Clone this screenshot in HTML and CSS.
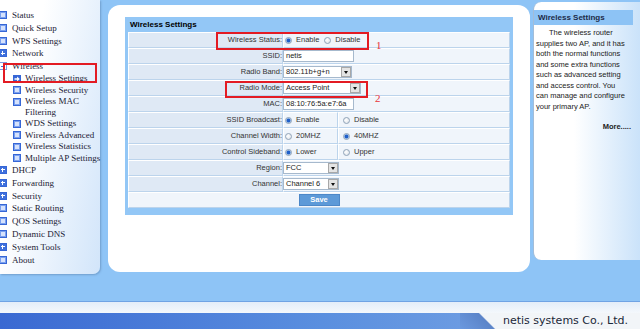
FILE: index.html
```html
<!DOCTYPE html>
<html lang="en">
<head>
    <meta charset="UTF-8">
    <title>Wireless Settings</title>
    <link rel="stylesheet" href="styles.css">
</head>
<body>

    <div class="top">

        <!-- Left menu -->
        <nav class="sidebar">
            <ul class="menu">
                <li><div class="row"><span class="ico"></span>Status</div></li>
                <li><div class="row"><span class="ico"></span>Quick Setup</div></li>
                <li><div class="row"><span class="ico"></span>WPS Settings</div></li>
                <li><div class="row"><span class="ico ico-plus"></span>Network</div></li>
                <li>
                    <div class="row"><span class="ico ico-minus"></span>Wireless</div>
                    <ul class="submenu">
                        <li class="sub-row">
                            <svg class="ico-arrow" width="8" height="8" viewBox="0 0 8 8"><rect width="8" height="8" fill="#3666d6"/><path d="M1.5 3.3h2.6V1.6L6.8 4 4.1 6.4V4.7H1.5z" fill="#fff"/></svg>
                            <span>Wireless Settings</span>
                        </li>
                        <li class="sub-row"><span class="ico"></span><span>Wireless Security</span></li>
                        <li class="sub-row"><span class="ico"></span><span>Wireless MAC<br>Filtering</span></li>
                        <li class="sub-row"><span class="ico"></span><span>WDS Settings</span></li>
                        <li class="sub-row"><span class="ico"></span><span>Wireless Advanced</span></li>
                        <li class="sub-row"><span class="ico"></span><span>Wireless Statistics</span></li>
                        <li class="sub-row"><span class="ico"></span><span>Multiple AP Settings</span></li>
                    </ul>
                </li>
                <li><div class="row"><span class="ico ico-plus"></span>DHCP</div></li>
                <li><div class="row"><span class="ico ico-plus"></span>Forwarding</div></li>
                <li><div class="row"><span class="ico ico-plus"></span>Security</div></li>
                <li><div class="row"><span class="ico"></span>Static Routing</div></li>
                <li><div class="row"><span class="ico"></span>QOS Settings</div></li>
                <li><div class="row"><span class="ico"></span>Dynamic DNS</div></li>
                <li><div class="row"><span class="ico ico-plus"></span>System Tools</div></li>
                <li><div class="row"><span class="ico"></span>About</div></li>
            </ul>
            <div class="mark mark-menu"></div>
        </nav>

        <!-- Settings form -->
        <div class="main">
            <div class="settings">
                <div class="settings-title">Wireless Settings</div>
                <table class="form">
                    <colgroup><col class="col-label"><col class="col-mid"><col></colgroup>
                    <tr>
                        <td class="label">Wireless Status:</td>
                        <td colspan="2"><span class="opt"><span class="radio on"></span>Enable</span><span class="opt"><span class="radio"></span>Disable</span></td>
                    </tr>
                    <tr>
                        <td class="label">SSID:</td>
                        <td colspan="2"><span class="field">netis</span></td>
                    </tr>
                    <tr>
                        <td class="label">Radio Band:</td>
                        <td colspan="2"><span class="select select-band"><span class="select-text">802.11b+g+n</span><span class="select-btn"></span></span></td>
                    </tr>
                    <tr>
                        <td class="label">Radio Mode:</td>
                        <td colspan="2"><span class="select select-mode"><span class="select-text">Access Point</span><span class="select-btn"></span></span></td>
                    </tr>
                    <tr>
                        <td class="label">MAC:</td>
                        <td colspan="2"><span class="field">08:10:76:5a:e7:6a</span></td>
                    </tr>
                    <tr>
                        <td class="label">SSID Broadcast:</td>
                        <td><span class="opt"><span class="radio on"></span>Enable</span></td>
                        <td class="third"><span class="opt"><span class="radio"></span>Disable</span></td>
                    </tr>
                    <tr>
                        <td class="label">Channel Width:</td>
                        <td><span class="opt"><span class="radio"></span>20MHZ</span></td>
                        <td class="third"><span class="opt"><span class="radio on"></span>40MHZ</span></td>
                    </tr>
                    <tr>
                        <td class="label">Control Sideband:</td>
                        <td><span class="opt"><span class="radio on"></span>Lower</span></td>
                        <td class="third"><span class="opt"><span class="radio"></span>Upper</span></td>
                    </tr>
                    <tr>
                        <td class="label">Region:</td>
                        <td colspan="2"><span class="select select-short"><span class="select-text">FCC</span><span class="select-btn"></span></span></td>
                    </tr>
                    <tr>
                        <td class="label">Channel:</td>
                        <td colspan="2"><span class="select select-short"><span class="select-text">Channel 6</span><span class="select-btn"></span></span></td>
                    </tr>
                    <tr>
                        <td class="save-cell" colspan="3"><span class="btn-save">Save</span></td>
                    </tr>
                </table>
            </div>

            <!-- annotations -->
            <div class="mark mark-status"></div>
            <span class="mark-num num-1">1</span>
            <div class="mark mark-mode"></div>
            <span class="mark-num num-2">2</span>
        </div>

        <!-- Help panel -->
        <aside class="help">
            <div class="help-title">Wireless Settings</div>
            <p class="help-text">The wireless router<br>supplies two AP, and it has<br>both the normal functions<br>and some extra functions<br>such as advanced setting<br>and access control. You<br>can manage and configure<br>your primary AP.</p>
            <div class="help-more">More.....</div>
        </aside>
    </div>

    <!-- Footer -->
    <div class="footer">
        <div class="footer-band"></div>
        <div class="footer-bar">
            <div class="footer-fill"></div>
            <div class="footer-brand">netis systems Co., Ltd.</div>
        </div>
    </div>

</body>
</html>
```

FILE: styles.css
```css
body {
    margin: 0;
    width: 640px;
    height: 329px;
    overflow: hidden;
    background-color: #8ec4f6;
    font-family: "Liberation Sans", Arial, sans-serif;
}

.top {
    display: flex;
    align-items: flex-start;
    height: 301px;
}

/* Left menu */
.sidebar {
    position: relative;
    flex: none;
    width: 100px;
    height: 274px;
    box-sizing: border-box;
    padding-top: 8.6px;
    background: linear-gradient(100deg, #ffffff 30%, #d2e5fa 100%);
    border-radius: 0 0 7px 0;
    box-shadow: 1px 1px 2px rgba(60, 90, 130, 0.35);
    font-family: "Liberation Serif", "Times New Roman", serif;
    font-size: 9px;
    color: #1b1b35;
    white-space: nowrap;
}

.menu,
.submenu {
    list-style: none;
    margin: 0;
    padding: 0;
}

.row {
    display: flex;
    align-items: center;
    height: 12.8px;
}

.row .ico {
    margin-left: -1px;
    margin-right: 5px;
}

.sub-row {
    display: flex;
    align-items: flex-start;
    padding: 0.5px 0 0.5px 13px;
    line-height: 10.5px;
}

.sub-row .ico,
.sub-row .ico-arrow {
    margin-top: 1.5px;
    margin-right: 4px;
    flex: none;
}

.ico {
    flex: none;
    width: 8px;
    height: 8px;
    box-sizing: border-box;
    border: 1px solid #3666d6;
    background: #d6e2fc;
    box-shadow: inset 0 0 0 1px #7aa0ef;
}

.ico-plus {
    background: linear-gradient(#fff, #fff) center / 4px 1.4px no-repeat,
                linear-gradient(#fff, #fff) center / 1.4px 4px no-repeat,
                #3f70dc;
    box-shadow: none;
}

.ico-minus {
    border-color: #7c9be0;
    background: linear-gradient(#3f70dc, #3f70dc) center / 4px 1px no-repeat, #fff;
    box-shadow: none;
}

/* Red annotation boxes */
.mark {
    position: absolute;
    box-sizing: border-box;
    border: 2px solid #e31b23;
}

.mark-menu {
    left: 3px;
    top: 63px;
    width: 94px;
    height: 20px;
}

.mark-status {
    left: 108px;
    top: 27px;
    width: 153px;
    height: 18px;
}

.mark-mode {
    left: 117px;
    top: 76px;
    width: 143px;
    height: 17px;
}

.mark-num {
    position: absolute;
    font-family: "Liberation Serif", "Times New Roman", serif;
    font-size: 11px;
    line-height: 11px;
    color: #e8333a;
}

.num-1 {
    left: 268px;
    top: 35px;
}

.num-2 {
    left: 267px;
    top: 88px;
}

/* Main panel */
.main {
    position: relative;
    flex: none;
    width: 422px;
    height: 267px;
    margin: 5px 0 0 8px;
    padding: 12px 0 0 17px;
    box-sizing: border-box;
    background: #fff;
    border-radius: 12px;
}

.settings {
    width: 388px;
    box-sizing: border-box;
    padding: 0 3px 7px;
    background: #93c7f6;
}

.settings-title {
    height: 15px;
    line-height: 15px;
    padding-left: 2px;
    font-size: 8px;
    font-weight: bold;
    color: #000;
}

.form {
    width: 382px;
    table-layout: fixed;
    border-collapse: separate;
    border-spacing: 0;
    font-size: 7.5px;
    line-height: 12px;
    color: #333;
}

.col-label {
    width: 155px;
}

.col-mid {
    width: 55px;
}

.form td {
    height: 16px;
    box-sizing: border-box;
    padding: 0;
    border-style: solid;
    border-width: 1px;
    border-color: #fff #bcd4ec #bcd4ec #fff;
    background: #f0f5fb;
    white-space: nowrap;
    vertical-align: middle;
}

.form td.label {
    background: #dfe9f5;
    text-align: right;
}

.form td.third {
    padding-left: 3px;
}

.form td.save-cell {
    text-align: center;
}

.opt {
    display: inline-flex;
    align-items: center;
    margin-right: 4px;
    vertical-align: middle;
}

.radio {
    width: 7px;
    height: 7px;
    margin: 0 4px 0 1px;
    box-sizing: border-box;
    border: 1px solid #8fa3b8;
    border-radius: 50%;
    background: radial-gradient(circle at 40% 40%, #fff, #d9dfe6);
}

.radio.on {
    background: radial-gradient(circle, #1f5fc9 0 1.5px, #9fc0ea 2.2px, #eef3fb 3.5px);
}

.field {
    display: inline-block;
    vertical-align: middle;
    width: 71px;
    height: 12px;
    margin-left: -1px;
    padding-left: 2px;
    box-sizing: border-box;
    border: 1px solid #a6b9cd;
    background: #fff;
    line-height: 10px;
    color: #222;
}

.select {
    display: inline-flex;
    align-items: center;
    vertical-align: middle;
    height: 12px;
    margin-left: -1px;
    box-sizing: border-box;
    border: 1px solid #a6b9cd;
    background: #fff;
    color: #222;
}

.select-band {
    width: 69px;
}

.select-mode {
    width: 78px;
}

.select-short {
    width: 56px;
}

.select-text {
    flex: 1;
    padding-left: 2px;
    line-height: 10px;
}

.select-btn {
    display: flex;
    align-items: center;
    justify-content: center;
    width: 10px;
    height: 10px;
    box-sizing: border-box;
    border: 1px solid #a8a8a8;
    background: #e4e4e4;
}

.select-btn::after {
    content: "";
    border-left: 2.5px solid transparent;
    border-right: 2.5px solid transparent;
    border-top: 3px solid #111;
}

.btn-save {
    display: inline-block;
    vertical-align: middle;
    width: 41px;
    height: 12px;
    box-sizing: border-box;
    border: 1px solid #4d88c8;
    background: #5d9ad8;
    color: #fff;
    font-weight: bold;
    line-height: 10px;
    text-align: center;
}

/* Help panel */
.help {
    flex: none;
    width: 115px;
    height: 258px;
    margin: 2px 0 0 3px;
    padding-top: 8px;
    box-sizing: border-box;
    border-left: 1px solid #a3bdd8;
    border-radius: 8px 0 0 8px;
    background: linear-gradient(to right, #ffffff 35%, #c4dff9);
    font-size: 7.5px;
    color: #222;
}

.help-title {
    width: 99px;
    height: 15px;
    box-sizing: border-box;
    padding-left: 4px;
    background: #8dc3f5;
    font-size: 8px;
    font-weight: bold;
    line-height: 15px;
    color: #1c2a48;
}

.help-text {
    margin: 3px 0 0 2px;
    line-height: 10.5px;
    text-indent: 13px;
    white-space: nowrap;
}

.help-more {
    width: 97px;
    margin-top: 9.5px;
    text-align: right;
    font-weight: bold;
    line-height: 10.5px;
}

/* Footer */
.footer {
    height: 28px;
    box-sizing: border-box;
    border-top: 1px solid #6fa3e4;
}

.footer-band {
    height: 11px;
    background: linear-gradient(to bottom, #e3edf9, #f4f8fc);
}

.footer-bar {
    display: flex;
    height: 16px;
}

.footer-fill {
    flex: 1;
    background: linear-gradient(to right, #3a69d2, #5a8fdf 70%, #6b9be2);
}

.footer-brand {
    width: 180px;
    padding-left: 43px;
    box-sizing: border-box;
    background: linear-gradient(45deg, #6b99df 0, #5b84c9 24px, #f2f5f8 25.5px);
    font-family: "DejaVu Sans", Verdana, sans-serif;
    font-size: 11px;
    line-height: 16px;
    color: #1a2838;
    white-space: nowrap;
}
```
